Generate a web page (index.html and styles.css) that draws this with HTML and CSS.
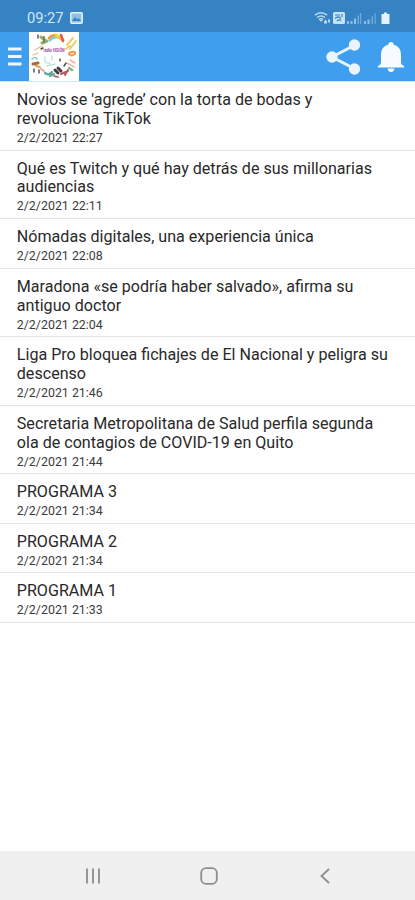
FILE: index.html
```html
<!DOCTYPE html>
<html lang="es">
<head>
<meta charset="utf-8">
<meta name="viewport" content="width=device-width, initial-scale=1">
<title>Noticias</title>
<link rel="stylesheet" href="styles.css">
</head>
<body>
<div class="screen">
  <div class="status">
    <span class="clock">09:27</span>
    <svg class="photo" width="13" height="12" viewBox="0 0 13 12"><rect x=".8" y=".8" width="11.4" height="10.4" rx="1" fill="#8fc0e6" stroke="#e2f1fb" stroke-width="1.5"/><path d="M2 9l3-4 2 2.4L8.600 6 11 9z" fill="#3683c4"/></svg>
    <svg class="signals" width="78" height="14" viewBox="0 0 78 14">
      <g fill="none" stroke="#bcdcf3" stroke-width="1.5"><path d="M1 4.200Q7-.6 13 4.200M3 6.500Q7 3.300 11 6.500M5 8.600Q7 7 9 8.600"/></g>
      <path d="M5.500 9h3L7 11zM10 10.500l1.500-2L13 10.500v2h-3zM14 8.500h2v2l-1 2-1-2z" fill="#bcdcf3"/>
      <rect x="19" y="1" width="12" height="12" rx="1.500" fill="#c5e1f5"/>
      <path d="M21 4h5M21 7.500c2-2 4-2 6 0M23 10c1.500-1.500 3-1.500 4 0M28 3v3" fill="none" stroke="#3683c4" stroke-width="1.200"/>
      <g fill="#8fc0e4"><path d="M33 10h2v3h-2zM36.500 10h2v3h-2zM40 7.500h2V13h-2zM50 10h2v3h-2zM53.500 8.500h2V13h-2z"/><path d="M43.500 4.500h1.500V13h-1.500zM46 2h1.200v11H46zM57.500 5.500H59V13h-1.500zM60.500 2h1.200v11h-1.200z" opacity=".65"/></g>
      <path d="M67.500 3H70V1.500h3V3h2.500v10h-8z" fill="#e5f3fc"/>
    </svg>
  </div>
  <header class="bar">
    <svg class="menu" width="14" height="20" viewBox="0 0 14 20"><path d="M0 2h13.500M0 9.500h13.500M0 17h13.500" stroke="#eef8ff" stroke-width="3.200"/></svg>
    <div class="logo">
      <svg width="50" height="49" viewBox="0 0 50 49">
        <g fill="none" stroke-linecap="round">
          <path d="M21 8q6-6 13 0" stroke="#7fd0dd" stroke-width="3"/>
          <path d="M20 6q3-3 6-3" stroke="#ef9a3f" stroke-width="2.500"/>
          <path d="M27 3l4 3" stroke="#f3d33d" stroke-width="3"/>
          <path d="M32 3l2 6" stroke="#ea5a3c" stroke-width="2.500"/>
          <path d="M12 5l5 4M13 11l5-2" stroke="#7fb673" stroke-width="3"/>
          <path d="M15 5v5" stroke="#a66f3e" stroke-width="2"/>
          <path d="M38 13l6-7M41 17l6-8M37 17l4-3" stroke="#efcc66" stroke-width="2"/>
          <path d="M40 21q7-3 6 1q-4 3-6 0" stroke="#ef9a4c" stroke-width="2"/>
          <path d="M41 28l5 3M38 31l7 4" stroke="#f0b69a" stroke-width="1.500"/>
          <path d="M6 18l7-4M4 23l5-2" stroke="#f2b58b" stroke-width="1.300"/>
          <path d="M3 27q3-3 5 0" stroke="#8fd0bc" stroke-width="1.700"/>
          <path d="M4 32l5-1" stroke="#a06d42" stroke-width="3"/>
          <path d="M7 34l4 1" stroke="#e49f4d" stroke-width="2"/>
          <path d="M12 37l3 2" stroke="#e6a5a0" stroke-width="2"/>
          <path d="M16 41q4 3 7-1M21 44l4-2" stroke="#5faa98" stroke-width="2.200"/>
          <path d="M32 42l7-3M36 43l3-5" stroke="#ba5965" stroke-width="2"/>
          <path d="M40 36l3 2" stroke="#73b592" stroke-width="2.500"/>
          <path d="M16 25q-2 7 5 6M23 24v4M18 34l8-2" stroke="#bce4db" stroke-width="1.400"/>
          <path d="M9 3v3M14 16l-2 1M5 37v3M10 38v3M31 27v2M37 31l-2 3" stroke="#4b4850" stroke-width="1.400"/>
          <path d="M26 38l3 3M29 36l3 3" stroke="#443d45" stroke-width="3"/>
          <path d="M25 44l4 1" stroke="#8b5965" stroke-width="1.500"/>
        </g>
        <text x="14.500" y="19.500" class="logo-text" textLength="21" lengthAdjust="spacingAndGlyphs">radio VISIÓN</text>
      </svg>
    </div>
    <svg class="share" width="36" height="36" viewBox="0 0 36 36"><path d="M29 6L6 18l23 12" fill="none" stroke="#e5f4ff" stroke-width="3"/><g fill="#e9f6ff"><circle cx="28.500" cy="6" r="5.700"/><circle cx="6" cy="18" r="5.700"/><circle cx="28.500" cy="30" r="5.700"/></g></svg>
    <svg class="bell" width="28" height="32" viewBox="0 0 28 32"><path d="M14 1c1.700 0 2.600 1 2.600 2.800C22 5 24 9 24 14v7c0 2 1 3 3 4v1.500H1V25c2-1 3-2 3-4v-7C4 9 6 5 11.400 3.800 11.400 2 12.300 1 14 1zM10.700 27.500h6.600c0 2-1.300 3.500-3.300 3.500s-3.300-1.500-3.300-3.500z" fill="#f8fcff"/></svg>
  </header>
  <main class="list">
    <article class="item"><h2>Novios se 'agrede’ con la torta de bodas y<br>revoluciona TikTok</h2><time>2/2/2021 22:27</time></article>
    <article class="item"><h2>Qué es Twitch y qué hay detrás de sus millonarias<br>audiencias</h2><time>2/2/2021 22:11</time></article>
    <article class="item"><h2>Nómadas digitales, una experiencia única</h2><time>2/2/2021 22:08</time></article>
    <article class="item"><h2>Maradona «se podría haber salvado», afirma su<br>antiguo doctor</h2><time>2/2/2021 22:04</time></article>
    <article class="item"><h2>Liga Pro bloquea fichajes de El Nacional y peligra su<br>descenso</h2><time>2/2/2021 21:46</time></article>
    <article class="item"><h2>Secretaria Metropolitana de Salud perfila segunda<br>ola de contagios de COVID-19 en Quito</h2><time>2/2/2021 21:44</time></article>
    <article class="item"><h2>PROGRAMA 3</h2><time>2/2/2021 21:34</time></article>
    <article class="item"><h2>PROGRAMA 2</h2><time>2/2/2021 21:34</time></article>
    <article class="item"><h2>PROGRAMA 1</h2><time>2/2/2021 21:33</time></article>
  </main>
  <nav class="nav">
    <svg width="18" height="18" viewBox="0 0 18 18"><path d="M3 1.500v15M9 1.500v15M15 1.500v15" stroke="#8d8d8d" stroke-width="1.800"/></svg>
    <svg width="18" height="18" viewBox="0 0 18 18"><rect x="1.200" y="1.200" width="15.600" height="15.600" rx="4.800" fill="none" stroke="#8d8d8d" stroke-width="1.800"/></svg>
    <svg width="18" height="18" viewBox="0 0 18 18"><path d="M13 2L5.500 9l7.500 7" fill="none" stroke="#8d8d8d" stroke-width="1.800"/></svg>
  </nav>
</div>
</body>
</html>
```
FILE: styles.css
```css
* { box-sizing: border-box; }
body { margin: 0; font-family: Roboto, "Liberation Sans", sans-serif; background: #fefefe; }
svg { display: block; flex: none; }
.screen { height: 900px; display: flex; flex-direction: column; overflow: hidden; }
.status { height: 32px; flex: none; display: flex; align-items: center; padding: 3px 23px 0 27px; background: #3683c4; }
.clock { width: 37px; font-size: 14.7px; line-height: 18px; color: #d1e7f7; white-space: nowrap; }
.photo { margin-left: 6px; }
.signals { margin-left: auto; }
.bar { height: 49px; flex: none; display: flex; align-items: center; padding: 0 10px 0 8px; background: #3f9eed; }
.logo { width: 50px; height: 49px; margin-left: 7px; background: #fff; }
.logo-text { font-size: 5px; font-weight: 700; fill: #a344a0; }
.share { margin-left: auto; }
.bell { margin-left: 15px; }
.list { flex: 1; border-top: 1px solid #d5e3ed; }
.item { padding: 9px 16px 4.6px 16.8px; border-bottom: 1px solid #e4e4e4; }
.item h2 { margin: 0; font-size: 16.1px; font-weight: 400; line-height: 18.9px; color: #292929; white-space: nowrap; }
.item time { display: block; margin-top: 1.1px; font-size: 12.4px; line-height: 15px; color: #3c3c3c; }
.nav { height: 49px; flex: none; display: flex; justify-content: space-between; align-items: center; padding: 0 81px 0 84px; background: #f0f0f0; }
```
